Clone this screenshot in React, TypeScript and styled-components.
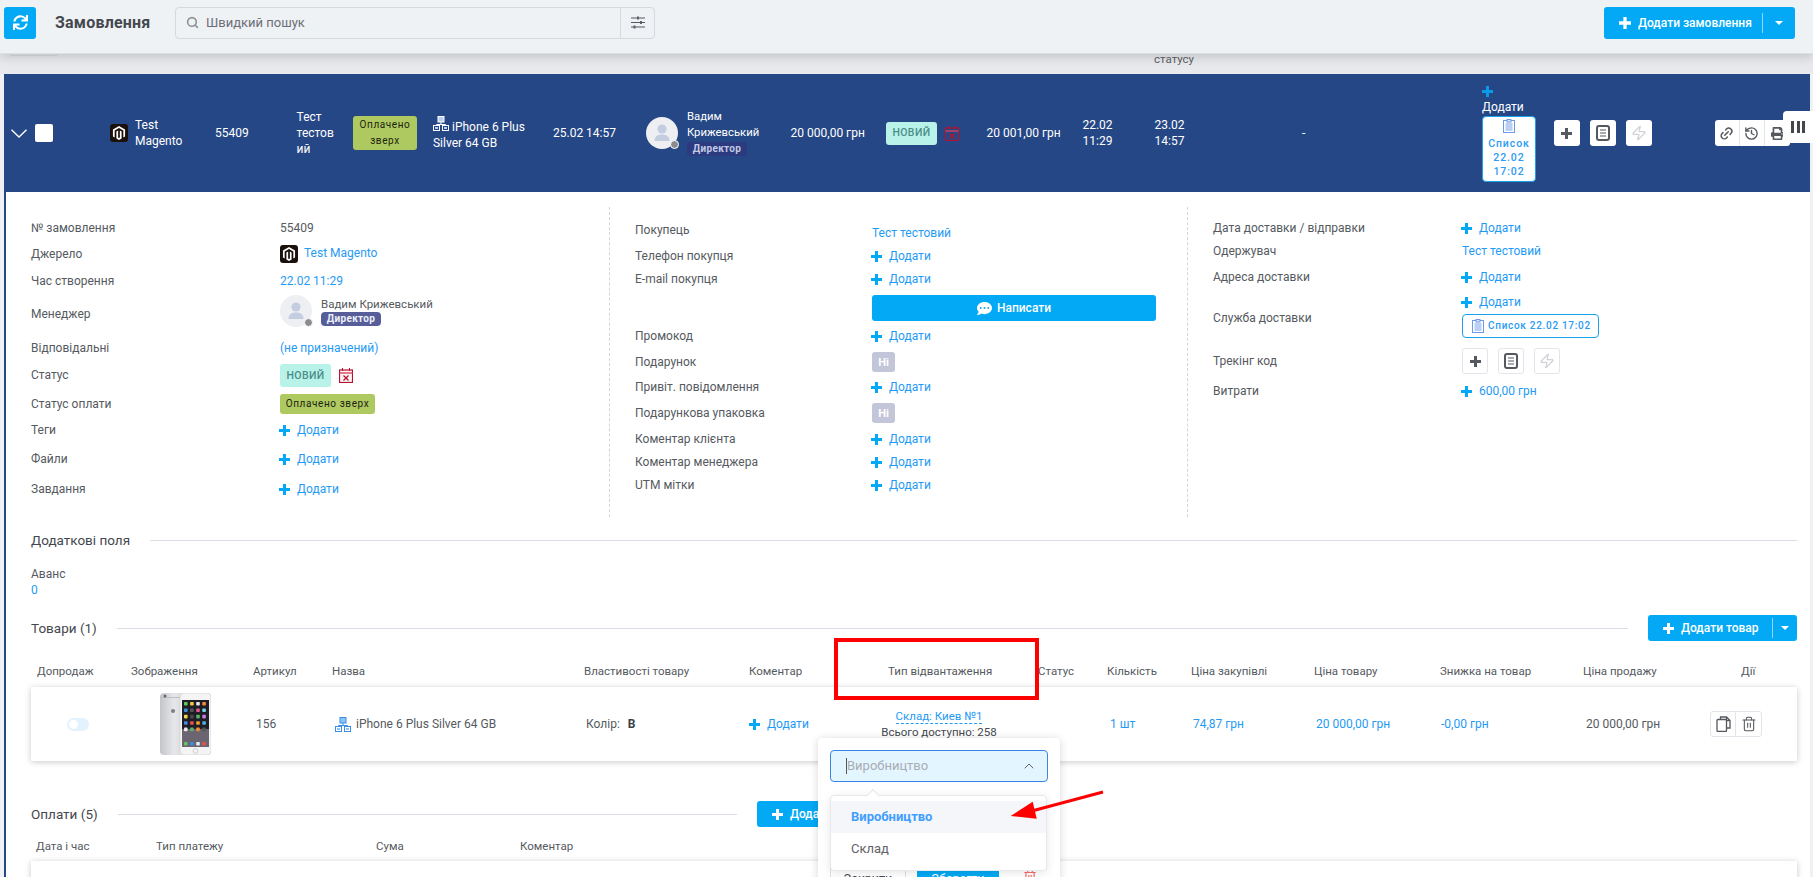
import React from "react";
import styled, { createGlobalStyle } from "styled-components";
import { FaSync, FaMagento, FaCommentDots, FaPrint } from "react-icons/fa";
import { Search, Zap, Link2, History, Trash2, ChevronUp } from "lucide-react";

const BLUE = "#03a9f4";
const LINK = "#1f9bf5";
const TEXT = "#555a60";

const Global = createGlobalStyle`
  html, body { margin: 0; padding: 0; background: #eff1f5; }
  body { font-family: Roboto, "Noto Sans", sans-serif; font-size: 12px; color: ${TEXT}; }
  * { box-sizing: border-box; }
`;

const Page = styled.div`
  position: relative;
  width: 1813px;
  height: 877px;
  overflow: hidden;
  background: #eff1f5;
`;

/* ---------- top bar ---------- */
const TopBar = styled.header`
  position: relative;
  z-index: 3;
  display: flex;
  align-items: center;
  height: 54px;
  padding: 0 18px 8px 4px;
  background: #eff2f5;
  border-bottom: 1px solid #dcdfe3;
  box-shadow: 0 3px 10px rgba(0, 0, 0, 0.16);
`;
const RefreshButton = styled.button`
  display: flex;
  align-items: center;
  justify-content: center;
  width: 32px;
  height: 32px;
  padding: 0;
  border: 0;
  border-radius: 3px;
  background: ${BLUE};
  color: #fff;
  font-size: 15px;
`;
const Title = styled.h1`
  width: 120px;
  margin: 0 0 0 19px;
  font-size: 16px;
  font-weight: 700;
  letter-spacing: 0.2px;
  color: #44484e;
`;
const SearchBox = styled.div`
  display: flex;
  align-items: center;
  width: 480px;
  height: 32px;
  border: 1px solid #d5d8dd;
  border-radius: 4px;
  color: #6b6f75;
  font-size: 13px;
`;
const SearchText = styled.span`
  flex: 1;
  display: flex;
  align-items: center;
  gap: 7px;
  padding-left: 10px;
`;
const SearchFilter = styled.span`
  display: flex;
  align-items: center;
  justify-content: center;
  width: 34px;
  height: 100%;
  border-left: 1px solid #d5d8dd;
`;
const Spacer = styled.div`
  flex: 1;
`;
const SplitButton = styled.button<{ $w: number; $h?: number }>`
  display: flex;
  align-items: center;
  width: ${(p) => p.$w}px;
  height: ${(p) => p.$h ?? 26}px;
  padding: 0 0 0 15px;
  border: 0;
  border-radius: 3px;
  background: ${BLUE};
  color: #fff;
  font-family: inherit;
  font-size: 12px;
  font-weight: 500;
  white-space: nowrap;
`;
const SplitLabel = styled.span`
  flex: 1;
  display: flex;
  align-items: center;
  gap: 7px;
`;
const SplitCaret = styled.span<{ $pad: number }>`
  display: flex;
  align-items: center;
  height: 20px;
  padding: 0 ${(p) => p.$pad}px;
  border-left: 1px solid rgba(255, 255, 255, 0.55);
  &::after {
    content: "";
    border-left: 4px solid transparent;
    border-right: 4px solid transparent;
    border-top: 4px solid #fff;
  }
`;

/* ---------- strip behind the bar ---------- */
const Strip = styled.div`
  display: flex;
  height: 20px;
  overflow: hidden;
  background: #e8e9ec;
  padding-left: 10px;
`;
const StripBox = styled.span`
  width: 48px;
  height: 2px;
  border: 1px solid #d8dade;
  border-top: 0;
  border-radius: 0 0 3px 3px;
`;
const StripText = styled.span`
  margin: -2px 0 0 1096px;
  font-size: 11.5px;
  line-height: 14px;
  color: #5c6066;
`;

/* ---------- order card ---------- */
const OrderCard = styled.section`
  width: 1806px;
  margin-left: 4px;
  background: #fff;
  border-left: 2px solid #264785;
`;
const OrderRow = styled.div`
  display: flex;
  align-items: center;
  height: 118px;
  margin-left: -2px;
  padding-left: 7px;
  background: #264785;
  color: #fff;
  font-size: 12px;
  line-height: 16px;
`;
const RowCell = styled.div<{ $w: number }>`
  display: flex;
  align-items: center;
  flex: 0 0 ${(p) => p.$w}px;
  width: ${(p) => p.$w}px;
  white-space: nowrap;
`;
const RowChevron = styled.svg`
  display: block;
  width: 16px;
  height: 9px;
`;
const Checkbox = styled.span`
  width: 18px;
  height: 18px;
  border-radius: 2px;
  background: #fff;
`;
const MagentoMark = styled.span<{ $mr: number }>`
  display: flex;
  align-items: center;
  justify-content: center;
  flex: none;
  width: 18px;
  height: 18px;
  margin-right: ${(p) => p.$mr}px;
  border-radius: 3px;
  background: #1b100c;
  color: #fff;
  font-size: 14px;
`;
const Wrapped = styled.div<{ $w: number }>`
  width: ${(p) => p.$w}px;
  white-space: normal;
  overflow-wrap: anywhere;
`;
const PayBadge = styled.span<{ $multi?: boolean }>`
  display: inline-flex;
  align-items: center;
  justify-content: center;
  width: ${(p) => (p.$multi ? 64 : 95)}px;
  height: ${(p) => (p.$multi ? 34 : 20)}px;
  border-radius: 3px;
  background: #aec960;
  color: #1c2410;
  font-size: 10px;
  letter-spacing: 0.6px;
  line-height: 16px;
  text-align: center;
  white-space: normal;
`;
const StatusBadge = styled.span`
  display: inline-flex;
  align-items: center;
  justify-content: center;
  width: 51px;
  height: 23px;
  border-radius: 3px;
  background: #b9f2e8;
  color: #4a8e88;
  font-size: 10.5px;
  font-weight: 500;
  letter-spacing: 0.4px;
`;
const RoleBadge = styled.span<{ $dark?: boolean }>`
  display: inline-flex;
  align-items: center;
  justify-content: center;
  width: 60px;
  height: 14px;
  border-radius: 4px;
  background: ${(p) => (p.$dark ? "#2c3a80" : "#565d99")};
  color: ${(p) => (p.$dark ? "#c3c9e4" : "#eef0f8")};
  font-size: 10px;
  font-weight: 700;
  letter-spacing: 0.3px;
  line-height: 14px;
`;
const AvatarWrap = styled.span`
  position: relative;
  flex: none;
  width: 32px;
  height: 32px;
  border-radius: 50%;
  background: #eeeff3;
`;
const AvatarDot = styled.span`
  position: absolute;
  right: -1px;
  bottom: 0;
  width: 9px;
  height: 9px;
  border: 1.5px solid #fff;
  border-radius: 50%;
  background: #8a8c90;
`;
const AvatarFigure = styled.svg`
  display: block;
  width: 32px;
  height: 32px;
`;
const PersonBlock = styled.div<{ $ml: number }>`
  margin-left: ${(p) => p.$ml}px;
  font-size: 11.3px;
`;
const CenterText = styled.div`
  text-align: center;
`;
const DeliveryColumn = styled.div`
  display: flex;
  flex-direction: column;
  align-items: flex-start;
`;
const PlusLine = styled.div`
  display: flex;
  align-items: center;
  height: 15px;
`;
const AddLine = styled.div`
  height: 16px;
  margin-bottom: 1px;
  line-height: 16px;
`;
const DeliveryCard = styled.div<{ $wide?: boolean }>`
  display: flex;
  flex-direction: ${(p) => (p.$wide ? "row" : "column")};
  align-items: center;
  gap: ${(p) => (p.$wide ? 4 : 0)}px;
  width: ${(p) => (p.$wide ? 137 : 54)}px;
  height: ${(p) => (p.$wide ? 24 : 66)}px;
  padding: ${(p) => (p.$wide ? "0 0 0 9px" : "2px 0 0")};
  border: 1px solid #1aa3ea;
  border-radius: 4px;
  background: #fff;
  color: #2b9bf4;
  font-size: ${(p) => (p.$wide ? 10 : 10.5)}px;
  font-weight: 500;
  letter-spacing: ${(p) => (p.$wide ? 0.7 : 0.9)}px;
  line-height: 14px;
  text-align: center;
  white-space: nowrap;
`;
const DeliveryLines = styled.div`
  margin-top: 4px;
`;
const ActionRow = styled.div<{ $gap: number }>`
  display: flex;
  gap: ${(p) => p.$gap}px;
`;
const ActionBtn = styled.span<{ $border?: boolean }>`
  display: flex;
  align-items: center;
  justify-content: center;
  width: 26px;
  height: 26px;
  border-radius: 3px;
  background: #fff;
  border: ${(p) => (p.$border ? "1px solid #e4e5ea" : "0")};
  color: #55585e;
`;
const BtnGroup = styled.div<{ $outlined?: boolean }>`
  display: flex;
  flex: none;
  height: 26px;
  border-radius: 3px;
  background: #fff;
  border: ${(p) => (p.$outlined ? "1px solid #e4e5ea" : "0")};
  color: #55585e;
`;
const GroupCell = styled.span<{ $w?: number }>`
  display: flex;
  align-items: center;
  justify-content: center;
  width: ${(p) => p.$w ?? 25}px;
  height: 100%;
  border-right: 1px solid #e4e5ea;
  &:last-child {
    border-right: 0;
  }
`;
const ColumnsTab = styled.div`
  position: absolute;
  right: 0;
  top: 111px;
  z-index: 2;
  display: flex;
  align-items: center;
  justify-content: center;
  gap: 2.5px;
  width: 30px;
  height: 32px;
  border-radius: 4px 0 0 4px;
  background: #fff;
`;
const ColumnBar = styled.i`
  display: block;
  width: 3px;
  height: 12px;
  background: #44474c;
`;

/* ---------- info columns ---------- */
const InfoGrid = styled.div`
  display: grid;
  grid-template-columns: 603px 578px 1fr;
  height: 325px;
  padding-top: 15px;
`;
const InfoColumn = styled.div<{ $dashed?: boolean }>`
  height: 310px;
  padding: 8px 0 0 25px;
  border-left: ${(p) => (p.$dashed ? "1px dashed #d5d6da" : "0")};
`;
const InfoRow = styled.div<{ $h: number; $label: number }>`
  display: grid;
  grid-template-columns: ${(p) => p.$label}px 1fr;
  align-items: center;
  height: ${(p) => p.$h}px;
`;
const Label = styled.span`
  color: ${TEXT};
  font-size: 12px;
`;
const Value = styled.span<{ $h?: number }>`
  display: flex;
  align-items: center;
  height: ${(p) => (p.$h ? `${p.$h}px` : "auto")};
  color: ${TEXT};
`;
const LinkText = styled.a<{ $dy?: number }>`
  display: inline-flex;
  align-items: center;
  gap: 7px;
  color: ${LINK};
  font-size: 12px;
  position: relative;
  top: ${(p) => p.$dy ?? 0}px;
`;
const AddBlock = styled.a`
  display: inline-flex;
  align-items: center;
  gap: 7px;
  margin-left: -1px;
  color: ${LINK};
  font-size: 12px;
  line-height: 14px;
`;
const WriteButton = styled.button`
  display: flex;
  align-items: center;
  justify-content: center;
  gap: 5px;
  width: 284px;
  height: 26px;
  padding: 0;
  border: 0;
  border-radius: 3px;
  background: ${BLUE};
  color: #fff;
  font-family: inherit;
  font-size: 12px;
  font-weight: 500;
`;
const NoBadge = styled.span`
  display: inline-flex;
  align-items: center;
  justify-content: center;
  width: 23px;
  height: 20px;
  border-radius: 3px;
  background: #c3c5d8;
  color: #fff;
  font-size: 11px;
  font-weight: 700;
`;
const ManagerBlock = styled.div`
  display: flex;
  gap: 9px;
  margin-top: -6px;
`;
const NameLine = styled.div`
  margin-top: 2px;
  line-height: 14px;
  font-size: 11.5px;
`;
const StatusIconSlot = styled.span`
  display: flex;
  margin-left: 8px;
`;
const DeliveryValue = styled.div`
  display: flex;
  flex-direction: column;
  align-items: flex-start;
  align-self: start;
  gap: 3px;
`;

/* ---------- lower sections ---------- */
const Lower = styled.div`
  padding: 0 13px 0 25px;
`;
const SectionHead = styled.div<{ $mt: number; $w?: number }>`
  display: flex;
  align-items: center;
  gap: 20px;
  width: ${(p) => (p.$w ? `${p.$w}px` : "auto")};
  min-height: 20px;
  margin-top: ${(p) => p.$mt}px;
`;
const SectionTitle = styled.h3`
  flex: none;
  margin: 0;
  font-size: 13.5px;
  font-weight: 400;
  color: #44484e;
`;
const SectionLine = styled.div`
  flex: 1;
  height: 1px;
  background: #dcdce6;
`;
const Advance = styled.div`
  margin-top: 16px;
  font-size: 12px;
  line-height: 16px;
`;
const AdvanceValue = styled.div`
  color: ${LINK};
`;
const GOODS_COLUMNS = "94px 120px 80px 255px 165px 125px 160px 70px 85px 125px 125px 140px 125px 97px";
const GoodsHead = styled.div`
  display: grid;
  grid-template-columns: ${GOODS_COLUMNS};
  align-items: center;
  height: 24px;
  margin-top: 18px;
`;
const HeadCell = styled.div<{ $pad: number }>`
  padding-left: ${(p) => p.$pad}px;
  font-size: 11.5px;
  color: ${TEXT};
  white-space: nowrap;
`;
const GoodsRow = styled.div`
  display: grid;
  grid-template-columns: ${GOODS_COLUMNS};
  align-items: center;
  height: 74px;
  margin-top: 4px;
  background: #fff;
  box-shadow: 0 1px 6px rgba(0, 0, 0, 0.22);
`;
const GoodsCell = styled.div<{ $pad: number; $blue?: boolean }>`
  display: flex;
  align-items: center;
  padding-left: ${(p) => p.$pad}px;
  color: ${(p) => (p.$blue ? LINK : TEXT)};
  white-space: nowrap;
`;
const Toggle = styled.span`
  display: block;
  width: 22px;
  height: 13px;
  padding: 2px;
  border-radius: 7px;
  background: #e2f3fd;
  &::before {
    content: "";
    display: block;
    width: 9px;
    height: 9px;
    border-radius: 50%;
    background: #fff;
  }
`;
const ProductName = styled.span`
  display: flex;
  align-items: center;
  gap: 5px;
`;
const PropValue = styled.b`
  margin-left: 8px;
  color: #3d4046;
`;
const ShipCell = styled.div`
  padding-right: 22px;
  text-align: center;
  line-height: 15px;
  margin-top: 1px;
  white-space: nowrap;
  font-size: 11.5px;
`;
const ShipLink = styled.a`
  color: ${LINK};
  border-bottom: 1px dashed ${LINK};
`;
const ShipInfo = styled.div`
  margin-top: 1px;
  color: #44484e;
`;
const PayHead = styled.div`
  display: grid;
  grid-template-columns: 125px 220px 144px 1fr;
  align-items: center;
  height: 24px;
  margin-top: 7px;
`;
const PayRow = styled.div`
  height: 40px;
  margin-top: 3px;
  background: #fff;
  box-shadow: 0 1px 6px rgba(0, 0, 0, 0.22);
`;

/* ---------- popover ---------- */
const Popover = styled.div`
  position: absolute;
  left: 818px;
  top: 738px;
  z-index: 4;
  width: 242px;
  height: 170px;
  padding: 12px;
  border-radius: 4px;
  background: #fff;
  box-shadow: 0 1px 8px rgba(0, 0, 0, 0.16);
`;
const SelectInput = styled.div`
  display: flex;
  align-items: center;
  justify-content: space-between;
  width: 218px;
  height: 32px;
  padding: 0 10px 0 15px;
  border: 1px solid #3a85e8;
  border-radius: 4px;
  background: #e3f5ff;
  color: #a9adb3;
  font-size: 13px;
`;
const SelectText = styled.span`
  border-left: 1px solid #555;
  line-height: 16px;
`;
const PopFooter = styled.div`
  display: flex;
  align-items: flex-start;
  margin-top: 84px;
`;
const CloseBtn = styled.span`
  width: 76px;
  height: 26px;
  border: 1px solid #dcdfe6;
  border-radius: 3px;
  line-height: 24px;
  text-align: center;
  font-size: 12.5px;
  color: #44484e;
`;
const SaveBtn = styled.span`
  width: 82px;
  height: 26px;
  margin-left: 11px;
  border-radius: 2px;
  background: ${BLUE};
  color: #fff;
  font-size: 12.5px;
  line-height: 26px;
  text-align: center;
`;
const PopTrash = styled.span`
  margin: 3px 0 0 24px;
  color: #f56c6c;
`;
const Dropdown = styled.ul`
  position: absolute;
  left: 12px;
  top: 57px;
  width: 217px;
  height: 76px;
  margin: 0;
  padding: 5px 0;
  list-style: none;
  border: 1px solid #e6e8ee;
  border-radius: 4px;
  background: #fff;
  box-shadow: 0 2px 10px rgba(0, 0, 0, 0.1);
  &::before {
    content: "";
    position: absolute;
    left: 37px;
    top: -5px;
    width: 9px;
    height: 9px;
    background: #fff;
    border-left: 1px solid #e6e8ee;
    border-top: 1px solid #e6e8ee;
    transform: rotate(45deg);
  }
`;
const Option = styled.li<{ $active?: boolean }>`
  position: relative;
  height: 32px;
  padding-left: 20px;
  line-height: 31px;
  font-size: 13px;
  font-weight: ${(p) => (p.$active ? 700 : 400)};
  color: ${(p) => (p.$active ? "#409eff" : "#606266")};
  background: ${(p) => (p.$active ? "#f5f6fa" : "transparent")};
`;

/* ---------- annotations ---------- */
const RedFrame = styled.div`
  position: absolute;
  left: 834px;
  top: 638px;
  z-index: 2;
  width: 205px;
  height: 62px;
  border: 4px solid #f00;
`;
const ArrowSvg = styled.svg`
  position: absolute;
  left: 1000px;
  top: 780px;
  z-index: 5;
`;

/* ---------- icons ---------- */
const PlusIcon = ({ color = BLUE, size = 11 }: { color?: string; size?: number }) => (
  <svg width={size} height={size} viewBox="0 0 11 11" style={{ flex: "none" }}>
    <path d="M4 0h3v4h4v3H7v4H4V7H0V4h4z" fill={color} />
  </svg>
);
const SlidersIcon = () => (
  <svg width="14" height="13" viewBox="0 0 14 13" fill="none" stroke="#55585e">
    <path d="M0 2h14M0 6.5h14M0 11h14" strokeWidth="1.2" />
    <path d="M7 .5v3M10 5v3M3.5 9.5v3" strokeWidth="1.8" />
  </svg>
);
const TreeIcon = ({ color, fill }: { color: string; fill: string }) => (
  <svg width="16" height="15" viewBox="0 0 16 15" fill="none" style={{ flex: "none" }}>
    <rect x="5" y=".5" width="6" height="5.5" fill={fill} stroke={color} />
    <path d="M8 6v2.5M3.5 10V8.5h9V10" stroke={color} />
    <rect x=".5" y="9.5" width="6" height="5" fill="none" stroke={color} />
    <rect x="9.5" y="9.5" width="6" height="5" fill="none" stroke={color} />
    <rect x="2" y="11" width="3" height="2" fill={fill} />
    <rect x="11" y="11" width="3" height="2" fill={fill} />
  </svg>
);
const CalendarX = ({ fill }: { fill: string }) => (
  <svg width="14" height="15" viewBox="0 0 14 15" fill="none" style={{ flex: "none" }}>
    <rect x=".5" y="2" width="13" height="12.5" fill={fill} stroke="#b5122f" strokeWidth="1.2" />
    <path d="M.5 5h13" stroke="#d8435f" strokeWidth="1.4" />
    <path d="M3.5 0v3M10.5 0v3" stroke="#b5122f" />
    <path d="M4.5 7.5l5 5M9.5 7.5l-5 5" stroke="#b5122f" strokeWidth="1.3" />
  </svg>
);
const ClipboardIcon = () => (
  <svg width="12" height="14" viewBox="0 0 12 14" fill="none" style={{ flex: "none" }}>
    <rect x=".5" y="1.5" width="11" height="12" fill="#fff" stroke="#6d9ae8" />
    <rect x="2.5" y="4" width="7" height="8" fill="#b9cff5" />
    <rect x="4" y=".5" width="4" height="2.5" fill="#dbe6fb" stroke="#6d9ae8" />
  </svg>
);
const DocIcon = () => (
  <svg width="14" height="16" viewBox="0 0 14 16" fill="none" stroke="#55585e">
    <rect x="1" y="1" width="12" height="14" rx="2" strokeWidth="2" />
    <path d="M4 5h6M4 8h6M4 11h6" strokeWidth="1.2" />
  </svg>
);
const CopyPages = () => (
  <svg width="15" height="16" viewBox="0 0 15 16" fill="none" stroke="#55585e" strokeWidth="1.3">
    <path d="M4.5 3V1h6l3.5 3.5V12h-3" />
    <path d="M10.5 1v3.5H14" />
    <rect x="1" y="3.5" width="9.5" height="12" rx="1" fill="#fff" />
  </svg>
);
const Person = () => (
  <AvatarFigure viewBox="0 0 32 32">
    <circle cx="16" cy="12" r="4.6" fill="#c4cde0" />
    <path d="M8.5 24c0-4.5 3-6.5 7.5-6.5s7.5 2 7.5 6.5z" fill="#c4cde0" />
  </AvatarFigure>
);
const Avatar = () => (
  <AvatarWrap>
    <Person />
    <AvatarDot />
  </AvatarWrap>
);
const AddLink = ({ label = "Додати" }: { label?: string }) => (
  <AddBlock>
    <PlusIcon />
    {label}
  </AddBlock>
);
const PhonePicture = () => {
  const tiles = ["#5fc75f", "#f2c744", "#e9e9e9", "#f58a3c", "#3d8fe0", "#555", "#e05a8a", "#6fd3e0", "#f5d547", "#4a4a4a", "#58b368", "#c77be0", "#3d8fe0", "#e85050", "#f0a030", "#4ab0e0", "#e9e9e9", "#58b368", "#f58a3c", "#555"];
  return (
    <svg width="51" height="62" viewBox="0 0 51 62">
      <defs>
        <linearGradient id="silver" x1="0" x2="1" y1="0" y2="0">
          <stop offset="0" stopColor="#c4c5c8" />
          <stop offset="0.5" stopColor="#e6e7e9" />
          <stop offset="1" stopColor="#d4d5d8" />
        </linearGradient>
      </defs>
      <rect x="0" y="0" width="28" height="62" rx="4" fill="url(#silver)" />
      <rect x="0" y="4" width="28" height="1" fill="#bdbec1" />
      <circle cx="5" cy="3" r="1.5" fill="#66686b" />
      <circle cx="13" cy="18" r="2" fill="#7d7f83" />
      <rect x="20" y="0" width="31" height="62" rx="4" fill="#f4f4f5" stroke="#c9cacc" strokeWidth=".6" />
      <rect x="22" y="7" width="27" height="47" fill="#1f1e26" />
      <rect x="22" y="36" width="27" height="18" fill="#6a6570" />
      <circle cx="35.5" cy="58" r="2.4" fill="none" stroke="#bfc0c3" strokeWidth=".7" />
      {tiles.map((c, i) => (
        <rect key={i} x={24 + (i % 4) * 6.1} y={9 + Math.floor(i / 4) * 6.4} width="3.6" height="3.6" rx=".8" fill={c} />
      ))}
      {["#5fc75f", "#3d8fe0", "#e9e9e9", "#e85050"].map((c, i) => (
        <rect key={c} x={24 + i * 6.1} y="49" width="3.6" height="3.6" rx=".8" fill={c} />
      ))}
    </svg>
  );
};

const LEFT = 249;
const MID = 237;
const RIGHT = 249;

export default function App() {
  return (
    <Page>
      <Global />
      <TopBar>
        <RefreshButton><FaSync /></RefreshButton>
        <Title>Замовлення</Title>
        <SearchBox>
          <SearchText><Search size={13} color="#8e9196" strokeWidth={3} />Швидкий пошук</SearchText>
          <SearchFilter><SlidersIcon /></SearchFilter>
        </SearchBox>
        <Spacer />
        <SplitButton $w={191} $h={32}>
          <SplitLabel><PlusIcon color="#fff" size={12} />Додати замовлення</SplitLabel>
          <SplitCaret $pad={12} />
        </SplitButton>
      </TopBar>

      <Strip>
        <StripBox />
        <StripText>статусу</StripText>
      </Strip>

      <OrderCard>
        <OrderRow>
          <RowCell $w={24}>
            <RowChevron viewBox="0 0 16 9" fill="none" stroke="#fff" strokeWidth="1.4"><path d="M.5.7L8 8l7.5-7.3" /></RowChevron>
          </RowCell>
          <RowCell $w={75}><Checkbox /></RowCell>
          <RowCell $w={105}>
            <MagentoMark $mr={7}><FaMagento /></MagentoMark>
            <Wrapped $w={60}>Test Magento</Wrapped>
          </RowCell>
          <RowCell $w={81.6}>55409</RowCell>
          <RowCell $w={56.4}><Wrapped $w={44}>Тест тестовий</Wrapped></RowCell>
          <RowCell $w={80}><PayBadge $multi>Оплачено зверх</PayBadge></RowCell>
          <RowCell $w={120}>
            <Wrapped $w={100}>
              <TreeIcon color="#fff" fill="#b9cff5" />
              <span style={{ marginLeft: 3 }}>iPhone 6 Plus Silver 64 GB</span>
            </Wrapped>
          </RowCell>
          <RowCell $w={93}>25.02 14:57</RowCell>
          <RowCell $w={144.6}>
            <Avatar />
            <PersonBlock $ml={9}>
              <div>Вадим</div>
              <div>Крижевський</div>
              <RoleBadge $dark>Директор</RoleBadge>
            </PersonBlock>
          </RowCell>
          <RowCell $w={95.4}>20 000,00 грн</RowCell>
          <RowCell $w={100.5}>
            <StatusBadge>НОВИЙ</StatusBadge>
            <StatusIconSlot><CalendarX fill="none" /></StatusIconSlot>
          </RowCell>
          <RowCell $w={96}>20 001,00 грн</RowCell>
          <RowCell $w={72}><CenterText>22.02<br />11:29</CenterText></RowCell>
          <RowCell $w={147.5}><CenterText>23.02<br />14:57</CenterText></RowCell>
          <RowCell $w={180}>-</RowCell>
          <RowCell $w={72}>
            <DeliveryColumn>
              <PlusLine><PlusIcon color="#0a9be8" /></PlusLine>
              <AddLine>Додати</AddLine>
              <DeliveryCard>
                <ClipboardIcon />
                <DeliveryLines>Список<br />22.02<br />17:02</DeliveryLines>
              </DeliveryCard>
            </DeliveryColumn>
          </RowCell>
          <RowCell $w={161}>
            <ActionRow $gap={10}>
              <ActionBtn><PlusIcon color="#55585e" /></ActionBtn>
              <ActionBtn><DocIcon /></ActionBtn>
              <ActionBtn><Zap size={16} color="#cfd1d6" strokeWidth={1.8} /></ActionBtn>
            </ActionRow>
          </RowCell>
          <BtnGroup>
            <GroupCell><Link2 size={15} strokeWidth={2.4} style={{ transform: "rotate(-45deg)" }} /></GroupCell>
            <GroupCell><History size={15} strokeWidth={2.2} /></GroupCell>
            <GroupCell><FaPrint size={13} /></GroupCell>
          </BtnGroup>
        </OrderRow>

        <InfoGrid>
          <InfoColumn>
            <InfoRow $h={26} $label={LEFT}><Label>№ замовлення</Label><Value>55409</Value></InfoRow>
            <InfoRow $h={26} $label={LEFT}>
              <Label>Джерело</Label>
              <Value><MagentoMark $mr={6}><FaMagento /></MagentoMark><LinkText $dy={-1}>Test Magento</LinkText></Value>
            </InfoRow>
            <InfoRow $h={28} $label={LEFT}><Label>Час створення</Label><Value><LinkText>22.02 11:29</LinkText></Value></InfoRow>
            <InfoRow $h={38} $label={LEFT}>
              <Label>Менеджер</Label>
              <ManagerBlock>
                <Avatar />
                <div>
                  <NameLine>Вадим Крижевський</NameLine>
                  <RoleBadge>Директор</RoleBadge>
                </div>
              </ManagerBlock>
            </InfoRow>
            <InfoRow $h={30} $label={LEFT}><Label>Відповідальні</Label><Value><LinkText>(не призначений)</LinkText></Value></InfoRow>
            <InfoRow $h={24} $label={LEFT}>
              <Label>Статус</Label>
              <Value><StatusBadge>НОВИЙ</StatusBadge><StatusIconSlot><CalendarX fill="#fff5f6" /></StatusIconSlot></Value>
            </InfoRow>
            <InfoRow $h={34} $label={LEFT}><Label>Статус оплати</Label><Value><PayBadge>Оплачено зверх</PayBadge></Value></InfoRow>
            <InfoRow $h={18} $label={LEFT}><Label>Теги</Label><Value><AddLink /></Value></InfoRow>
            <InfoRow $h={40} $label={LEFT}><Label>Файли</Label><Value><AddLink /></Value></InfoRow>
            <InfoRow $h={20} $label={LEFT}><Label>Завдання</Label><Value><AddLink /></Value></InfoRow>
          </InfoColumn>

          <InfoColumn $dashed>
            <InfoRow $h={30} $label={MID}><Label>Покупець</Label><Value><LinkText $dy={3}>Тест тестовий</LinkText></Value></InfoRow>
            <InfoRow $h={22} $label={MID}><Label>Телефон покупця</Label><Value><AddLink /></Value></InfoRow>
            <InfoRow $h={24} $label={MID}><Label>E-mail покупця</Label><Value><AddLink /></Value></InfoRow>
            <InfoRow $h={34} $label={MID}><span /><WriteButton><FaCommentDots size={15} />Написати</WriteButton></InfoRow>
            <InfoRow $h={22} $label={MID}><Label>Промокод</Label><Value><AddLink /></Value></InfoRow>
            <InfoRow $h={30} $label={MID}><Label>Подарунок</Label><Value><NoBadge>Ні</NoBadge></Value></InfoRow>
            <InfoRow $h={20} $label={MID}><Label>Привіт. повідомлення</Label><Value><AddLink /></Value></InfoRow>
            <InfoRow $h={32} $label={MID}><Label>Подарункова упаковка</Label><Value><NoBadge>Ні</NoBadge></Value></InfoRow>
            <InfoRow $h={20} $label={MID}><Label>Коментар клієнта</Label><Value><AddLink /></Value></InfoRow>
            <InfoRow $h={26} $label={MID}><Label>Коментар менеджера</Label><Value><AddLink /></Value></InfoRow>
            <InfoRow $h={20} $label={MID}><Label>UTM мітки</Label><Value><AddLink /></Value></InfoRow>
          </InfoColumn>

          <InfoColumn $dashed>
            <InfoRow $h={26} $label={RIGHT}><Label>Дата доставки / відправки</Label><Value><AddLink /></Value></InfoRow>
            <InfoRow $h={20} $label={RIGHT}><Label>Одержувач</Label><Value><LinkText>Тест тестовий</LinkText></Value></InfoRow>
            <InfoRow $h={32} $label={RIGHT}><Label>Адреса доставки</Label><Value><AddLink /></Value></InfoRow>
            <InfoRow $h={50} $label={RIGHT}>
              <Label>Служба доставки</Label>
              <DeliveryValue>
                <Value $h={18}><AddLink /></Value>
                <DeliveryCard $wide><ClipboardIcon />Список 22.02 17:02</DeliveryCard>
              </DeliveryValue>
            </InfoRow>
            <InfoRow $h={36} $label={RIGHT}>
              <Label>Трекінг код</Label>
              <ActionRow $gap={10}>
                <ActionBtn $border><PlusIcon color="#55585e" /></ActionBtn>
                <ActionBtn $border><DocIcon /></ActionBtn>
                <ActionBtn $border><Zap size={16} color="#cfd1d6" strokeWidth={1.8} /></ActionBtn>
              </ActionRow>
            </InfoRow>
            <InfoRow $h={24} $label={RIGHT}><Label>Витрати</Label><Value><AddLink label="600,00 грн" /></Value></InfoRow>
          </InfoColumn>
        </InfoGrid>

        <Lower>
          <SectionHead $mt={13}>
            <SectionTitle>Додаткові поля</SectionTitle>
            <SectionLine />
          </SectionHead>
          <Advance>
            Аванс
            <AdvanceValue>0</AdvanceValue>
          </Advance>

          <SectionHead $mt={17}>
            <SectionTitle>Товари (1)</SectionTitle>
            <SectionLine />
            <SplitButton $w={149}>
              <SplitLabel><PlusIcon color="#fff" />Додати товар</SplitLabel>
              <SplitCaret $pad={8} />
            </SplitButton>
          </SectionHead>

          <GoodsHead>
            <HeadCell $pad={6}>Допродаж</HeadCell>
            <HeadCell $pad={6}>Зображення</HeadCell>
            <HeadCell $pad={8}>Артикул</HeadCell>
            <HeadCell $pad={7}>Назва</HeadCell>
            <HeadCell $pad={4}>Властивості товару</HeadCell>
            <HeadCell $pad={4}>Коментар</HeadCell>
            <HeadCell $pad={18}>Тип відвантаження</HeadCell>
            <HeadCell $pad={8}>Статус</HeadCell>
            <HeadCell $pad={7}>Кількість</HeadCell>
            <HeadCell $pad={6}>Ціна закупівлі</HeadCell>
            <HeadCell $pad={4}>Ціна товару</HeadCell>
            <HeadCell $pad={5}>Знижка на товар</HeadCell>
            <HeadCell $pad={8}>Ціна продажу</HeadCell>
            <HeadCell $pad={41}>Дії</HeadCell>
          </GoodsHead>

          <GoodsRow>
            <GoodsCell $pad={36}><Toggle /></GoodsCell>
            <GoodsCell $pad={35}><PhonePicture /></GoodsCell>
            <GoodsCell $pad={11}>156</GoodsCell>
            <GoodsCell $pad={10}><ProductName><TreeIcon color="#3a8fe8" fill="#8cc4f5" />iPhone 6 Plus Silver 64 GB</ProductName></GoodsCell>
            <GoodsCell $pad={6}>Колір:<PropValue>B</PropValue></GoodsCell>
            <GoodsCell $pad={5}><AddLink /></GoodsCell>
            <ShipCell>
              <ShipLink>Склад: Киев №1</ShipLink>
              <ShipInfo>Всього доступно: 258</ShipInfo>
            </ShipCell>
            <GoodsCell $pad={0} />
            <GoodsCell $pad={10} $blue>1 шт</GoodsCell>
            <GoodsCell $pad={8} $blue>74,87 грн</GoodsCell>
            <GoodsCell $pad={6} $blue>20 000,00 грн</GoodsCell>
            <GoodsCell $pad={6} $blue>-0,00 грн</GoodsCell>
            <GoodsCell $pad={11}>20 000,00 грн</GoodsCell>
            <GoodsCell $pad={10}>
              <BtnGroup $outlined>
                <GroupCell><CopyPages /></GroupCell>
                <GroupCell><Trash2 size={16} strokeWidth={1.6} /></GroupCell>
              </BtnGroup>
            </GoodsCell>
          </GoodsRow>

          <SectionHead $mt={40} $w={836}>
            <SectionTitle>Оплати (5)</SectionTitle>
            <SectionLine />
            <SplitButton $w={110}>
              <SplitLabel><PlusIcon color="#fff" />Додати</SplitLabel>
            </SplitButton>
          </SectionHead>
          <PayHead>
            <HeadCell $pad={5}>Дата і час</HeadCell>
            <HeadCell $pad={0}>Тип платежу</HeadCell>
            <HeadCell $pad={0}>Сума</HeadCell>
            <HeadCell $pad={0}>Коментар</HeadCell>
          </PayHead>
          <PayRow />
        </Lower>
      </OrderCard>

      <ColumnsTab><ColumnBar /><ColumnBar /><ColumnBar /></ColumnsTab>
      <RedFrame />

      <Popover>
        <SelectInput>
          <SelectText>Виробництво</SelectText>
          <ChevronUp size={16} strokeWidth={1.5} color="#606266" />
        </SelectInput>
        <PopFooter>
          <CloseBtn>Закрити</CloseBtn>
          <SaveBtn>Зберегти</SaveBtn>
          <PopTrash><Trash2 size={14} /></PopTrash>
        </PopFooter>
        <Dropdown>
          <Option $active>Виробництво</Option>
          <Option>Склад</Option>
        </Dropdown>
      </Popover>

      <ArrowSvg width="110" height="45" viewBox="0 0 110 45">
        <path d="M103 12 L28 32" stroke="#f00" strokeWidth="3" />
        <path d="M10.7 36 L32.7 21.7 L36.7 38.7 Z" fill="#f00" />
      </ArrowSvg>
    </Page>
  );
}
